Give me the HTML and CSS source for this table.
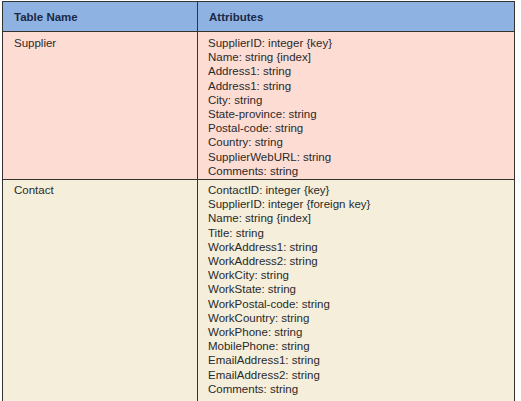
FILE: index.html
```html
<!DOCTYPE html>
<html>
<head>
<meta charset="utf-8">
<link rel="stylesheet" href="styles.css">
</head>
<body>
<table class="grid">
  <thead>
    <tr class="head">
      <th class="c1">Table Name</th>
      <th class="c2">Attributes</th>
    </tr>
  </thead>
  <tbody>
    <tr class="row supplier">
      <td class="c1">Supplier</td>
      <td class="c2">
        <div>SupplierID: integer {key}</div>
        <div>Name: string {index]</div>
        <div>Address1: string</div>
        <div>Address1: string</div>
        <div>City: string</div>
        <div>State-province: string</div>
        <div>Postal-code: string</div>
        <div>Country: string</div>
        <div>SupplierWebURL: string</div>
        <div>Comments: string</div>
      </td>
    </tr>
    <tr class="row contact">
      <td class="c1">Contact</td>
      <td class="c2">
        <div>ContactID: integer {key}</div>
        <div>SupplierID: integer {foreign key}</div>
        <div>Name: string {index]</div>
        <div>Title: string</div>
        <div>WorkAddress1: string</div>
        <div>WorkAddress2: string</div>
        <div>WorkCity: string</div>
        <div>WorkState: string</div>
        <div>WorkPostal-code: string</div>
        <div>WorkCountry: string</div>
        <div>WorkPhone: string</div>
        <div>MobilePhone: string</div>
        <div>EmailAddress1: string</div>
        <div>EmailAddress2: string</div>
        <div>Comments: string</div>
      </td>
    </tr>
  </tbody>
</table>
</body>
</html>
```
FILE: styles.css
```css
html, body {
  margin: 0;
  padding: 0;
  background: #ffffff;
}
body {
  padding: 1px 0 0 2px;
  font-family: "Liberation Sans", Arial, sans-serif;
  color: #2a2a2a;
}
.grid {
  border-collapse: collapse;
  width: 513px;
  table-layout: fixed;
}
.grid th, .grid td {
  border: 1px solid #35332e;
  vertical-align: top;
  text-align: left;
}
.grid .c1 { width: 183px; }
.head th {
  background: #8eb3e2;
  color: #1b2946;
  font-weight: bold;
  font-size: 11.5px;
  height: 29px;
  padding: 0 0 0 11px;
  vertical-align: middle;
}
.row td {
  font-size: 11.5px;
  line-height: 14.2px;
  padding: 4px 8px 1px 10px;
}
.row .c1 { padding-left: 11px; }
.supplier td { background: #fddcd4; }
.contact td {
  background: #f4eedb;
  padding-top: 3px;
  padding-bottom: 12px;
}
```
